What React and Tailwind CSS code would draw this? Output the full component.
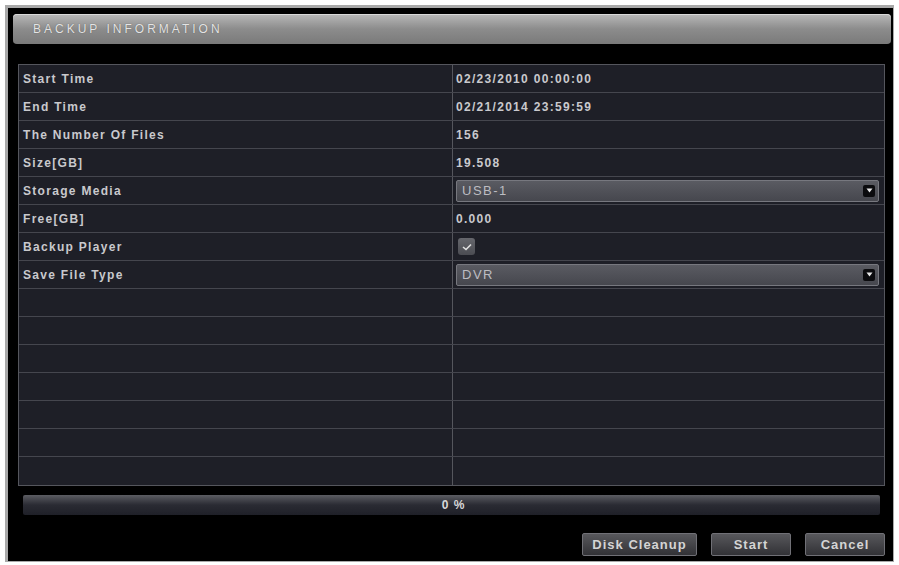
import React from "react";

const rows = [
  { label: "Start Time", value: "02/23/2010 00:00:00" },
  { label: "End Time", value: "02/21/2014 23:59:59" },
  { label: "The Number Of Files", value: "156" },
  { label: "Size[GB]", value: "19.508" },
  { label: "Storage Media", select: "USB-1" },
  { label: "Free[GB]", value: "0.000" },
  { label: "Backup Player", check: true },
  { label: "Save File Type", select: "DVR" },
];

function Arrow() {
  return (
    <div className="w-[12px] h-[12px] bg-[#0b0b0e] rounded-[2px] flex items-center justify-center">
      <svg width="7" height="5" viewBox="0 0 7 5">
        <path d="M0.5 0.5 L6.5 0.5 L3.5 4.5 Z" fill="#e8e8e8" />
      </svg>
    </div>
  );
}

function Select({ text }) {
  return (
    <div className="h-[22px] ml-[3px] mr-[5px] flex items-center justify-between pl-[5px] pr-[3px] bg-gradient-to-b from-[#5a5b62] to-[#46474e] border border-[#77787f] rounded-[2px]">
      <span className="text-[#bdbdc2] font-normal text-[13px] tracking-[1.5px]">{text}</span>
      <Arrow />
    </div>
  );
}

function Check() {
  return (
    <div className="ml-[5px] w-[17px] h-[17px] rounded-[3px] bg-gradient-to-b from-[#66676d] to-[#4b4c52] flex items-center justify-center">
      <svg width="10" height="8" viewBox="0 0 10 8">
        <path d="M1 4 L4 6.5 L9 1.5" stroke="#e0e0e0" strokeWidth="1.6" fill="none" />
      </svg>
    </div>
  );
}

function Button({ children, w }) {
  return (
    <div
      className={`${w} h-[23px] flex items-center justify-center text-[13px] font-bold tracking-[1px] text-[#d4d4d4] bg-gradient-to-b from-[#58585c] to-[#323236] border border-[#707076] rounded-[2px]`}
    >
      {children}
    </div>
  );
}

export default function App() {
  const empty = Array.from({ length: 7 });
  return (
    <div
      className="w-[899px] h-[565px] bg-white pt-[5px] pl-[5px] pr-[5px] pb-[3px]"
      style={{ fontFamily: '"Liberation Sans", Arial, sans-serif' }}
    >
      <div className="w-full h-full bg-[#a9a9a9] pl-[3px] pt-[3px] pr-[1px] pb-[1px]">
        <div className="w-full h-full bg-black flex flex-col pl-[5px] pr-[2px] pt-[6px]">
          <div className="h-[30px] rounded-[4px] bg-gradient-to-b from-[#b9b9b9] via-[#8c8c8c] to-[#7a7a7a] flex items-center pl-[20px] shadow-[inset_0_1px_0_#d8d8d8]">
            <span className="text-[12px] tracking-[3px] text-[#e4e4e4]" style={{ textShadow: "0 0 1px #555" }}>BACKUP INFORMATION</span>
          </div>
          <div className="mt-[20px] ml-[5px] mr-[6px] border border-[#55565d] bg-[#1e1f27]">
            {rows.map((r, i) => (
              <div key={i} className="h-[28px] flex border-b border-[#45464e] text-[12px] tracking-[1.3px] text-[#c9c9cd] font-bold">
                <div className="w-[434px] border-r border-[#55565d] flex items-center pl-[4px]">{r.label}</div>
                <div className="flex-1 flex flex-col justify-center">
                  {r.select ? (
                    <Select text={r.select} />
                  ) : r.check ? (
                    <Check />
                  ) : (
                    <span className="pl-[3px]">{r.value}</span>
                  )}
                </div>
              </div>
            ))}
            {empty.map((_, i) => (
              <div key={i} className={`h-[28px] flex ${i < 6 ? "border-b border-[#45464e]" : ""}`}>
                <div className="w-[434px] border-r border-[#55565d]" />
                <div className="flex-1" />
              </div>
            ))}
          </div>
          <div className="mt-[9px] ml-[10px] mr-[11px] h-[20px] bg-gradient-to-b from-[#5c5d63] via-[#2a2b33] to-[#1f2028] rounded-[2px] flex items-center justify-center">
            <span className="text-[12px] text-[#d8d8d8] font-bold tracking-[1px] pl-[4px]">0 %</span>
          </div>
          <div className="mt-[18px] flex justify-end gap-[14px] pr-[6px]">
            <Button w="w-[115px]">Disk Cleanup</Button>
            <Button w="w-[80px]">Start</Button>
            <Button w="w-[80px]">Cancel</Button>
          </div>
        </div>
      </div>
    </div>
  );
}
